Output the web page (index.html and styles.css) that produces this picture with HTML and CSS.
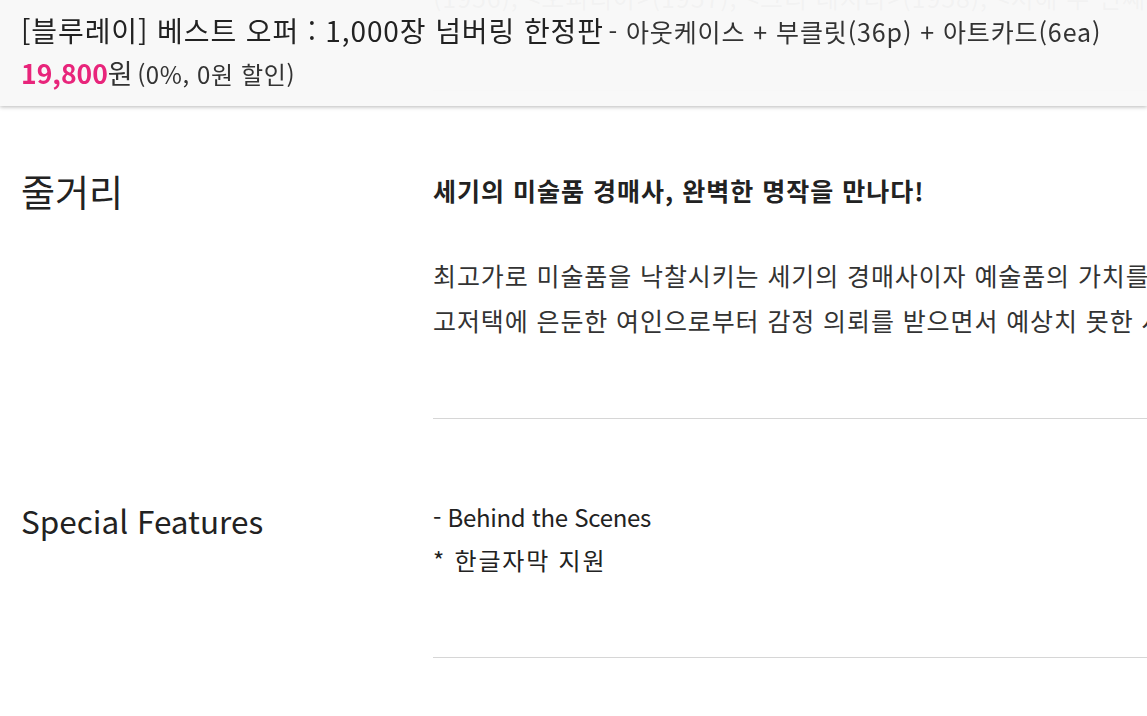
FILE: index.html
```html
<!DOCTYPE html>
<html lang="ko">
<head>
<meta charset="utf-8">
<title>베스트 오퍼</title>
<link rel="stylesheet" href="styles.css">
</head>
<body>
<header class="topbar">
  <div class="title-line">
    <span class="title-main">[블루레이] 베스트 오퍼 : 1,000장 넘버링 한정판</span>
    <span class="title-sub">- 아웃케이스 + 부클릿(36p) + 아트카드(6ea)</span>
  </div>
  <div class="price-line">
    <span class="price">19,800</span><span class="won">원</span>
    <span class="discount">(0%, 0원 할인)</span>
  </div>
</header>

<main class="content">
  <section class="row row-prev">
    <div class="label"></div>
    <div class="body">
      <p class="para">(1956), &lt;오피리아&gt;(1957), &lt;그리 레지다&gt;(1958), &lt;서해 두 번째&gt;(1959), &lt;목로주점&gt;(1960)</p>
    </div>
  </section>

  <section class="row row-plot">
    <h2 class="label">줄거리</h2>
    <div class="body">
      <p class="lead">세기의 미술품 경매사, 완벽한 명작을 만나다!</p>
      <p class="para">최고가로 미술품을 낙찰시키는 세기의 경매사이자 예술품의 가치를 알아보는 감정사 버질 올드먼.<br>고저택에 은둔한 여인으로부터 감정 의뢰를 받으면서 예상치 못한 사건에 휘말리게 되는데...</p>
    </div>
  </section>

  <section class="row row-features">
    <h2 class="label label-latin">Special Features</h2>
    <div class="body">
      <p class="list"><span class="list-en">- Behind the Scenes</span><br><span class="list-ko">* 한글자막 지원</span></p>
    </div>
  </section>
</main>
</body>
</html>
```
FILE: styles.css
```css
html, body {
  margin: 0;
  padding: 0;
  background: #ffffff;
  overflow: hidden;
}

body {
  font-family: "Noto Sans CJK KR", "Noto Sans", sans-serif;
  color: #222222;
  width: 1147px;
  height: 716px;
}

.topbar {
  position: fixed;
  top: 0;
  left: 0;
  right: 0;
  height: 106px;
  box-sizing: border-box;
  padding: 9px 0 0 21px;
  background: rgba(248, 248, 248, 0.97);
  box-shadow: 0 1px 4px rgba(0, 0, 0, 0.28);
  z-index: 10;
  white-space: nowrap;
}

.title-line {
  height: 42px;
  line-height: 42px;
}

.title-main {
  font-size: 28px;
  letter-spacing: 0.9px;
  color: #222222;
}

.title-sub {
  font-size: 25px;
  letter-spacing: 0.9px;
  color: #333333;
}

.price-line {
  height: 44px;
  line-height: 44px;
}

.price {
  font-size: 26.5px;
  font-weight: 700;
  color: #e8257b;
}

.won {
  font-size: 27px;
  color: #333333;
}

.discount {
  font-size: 24px;
  letter-spacing: 0.6px;
  color: #333333;
}

.content {
  display: flex;
  flex-direction: column;
}

.row {
  display: grid;
  grid-template-columns: 433px 1400px;
}

.label {
  margin: 0;
  padding: 80px 0 0 21px;
  font-size: 37px;
  font-weight: 400;
  line-height: 40px;
  color: #222222;
}

.label-latin {
  font-size: 31.5px;
  padding-top: 81px;
}

.body {
  border-bottom: 1px solid #d6d6d6;
  padding: 84px 0 75px;
}

.row-prev {
  margin-top: -25px;
}

.row-prev .body {
  padding: 0 0 70px;
}

.row-prev .para {
  color: #444444;
  white-space: nowrap;
}

.lead {
  margin: 0 0 48px;
  font-size: 25px;
  font-weight: 700;
  letter-spacing: 1px;
  line-height: 30px;
  color: #222222;
}

.para {
  margin: 0;
  font-size: 25px;
  letter-spacing: 0.9px;
  line-height: 45px;
  color: #333333;
}

.row-features .body {
  padding: 76px 0 76px;
}

.list {
  margin: 0;
  font-size: 24px;
  line-height: 43px;
  color: #222222;
}

.list-en {
  letter-spacing: -0.3px;
}

.list-ko {
  letter-spacing: 1.8px;
}
```
